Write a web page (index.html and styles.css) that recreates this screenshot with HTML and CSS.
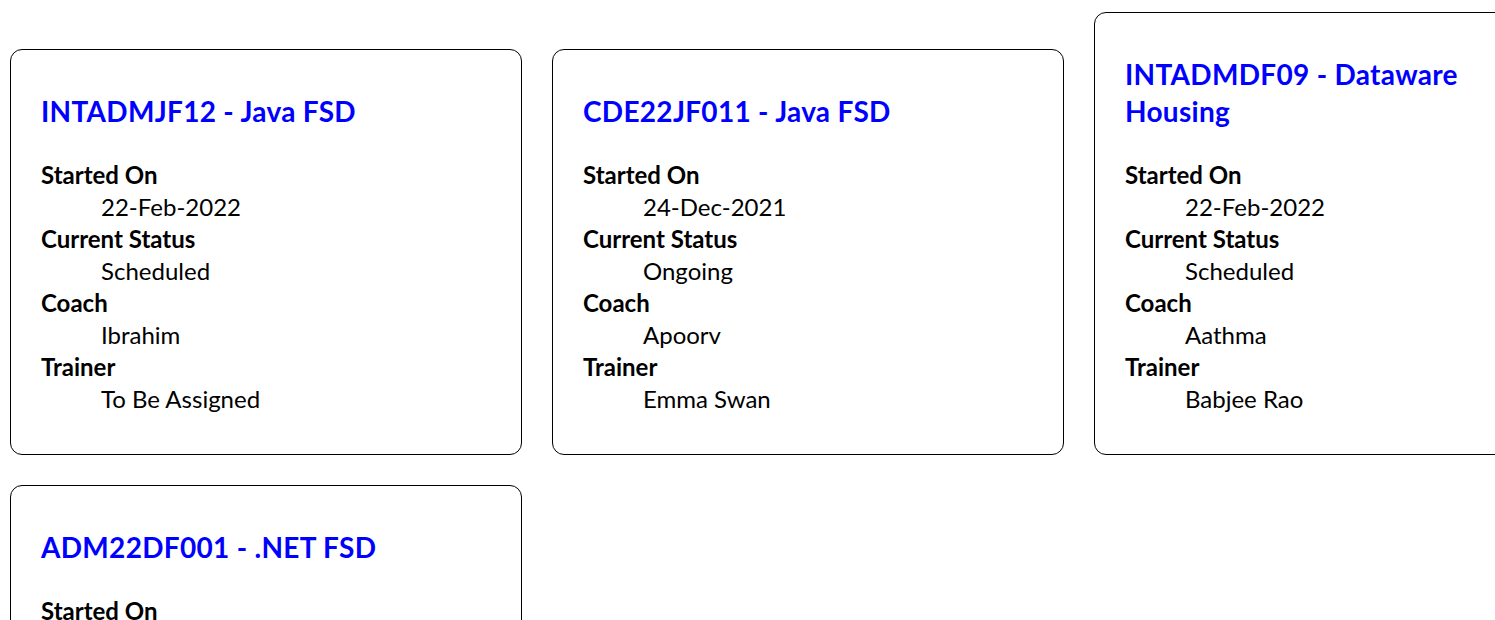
FILE: index.html
```html
<!DOCTYPE html>
<html lang="en">
<head>
<meta charset="utf-8">
<title>Batches</title>
<link rel="stylesheet" href="styles.css">
</head>
<body>
<div class="cards">
  <div class="card">
    <h3 class="card-title">INTADMJF12 - Java FSD</h3>
    <dl class="card-details">
      <dt>Started On</dt><dd>22-Feb-2022</dd>
      <dt>Current Status</dt><dd>Scheduled</dd>
      <dt>Coach</dt><dd>Ibrahim</dd>
      <dt>Trainer</dt><dd>To Be Assigned</dd>
    </dl>
  </div>
  <div class="card">
    <h3 class="card-title">CDE22JF011 - Java FSD</h3>
    <dl class="card-details">
      <dt>Started On</dt><dd>24-Dec-2021</dd>
      <dt>Current Status</dt><dd>Ongoing</dd>
      <dt>Coach</dt><dd>Apoorv</dd>
      <dt>Trainer</dt><dd>Emma Swan</dd>
    </dl>
  </div>
  <div class="card">
    <h3 class="card-title">INTADMDF09 - Dataware Housing</h3>
    <dl class="card-details">
      <dt>Started On</dt><dd>22-Feb-2022</dd>
      <dt>Current Status</dt><dd>Scheduled</dd>
      <dt>Coach</dt><dd>Aathma</dd>
      <dt>Trainer</dt><dd>Babjee Rao</dd>
    </dl>
  </div>
  <div class="card">
    <h3 class="card-title">ADM22DF001 - .NET FSD</h3>
    <dl class="card-details">
      <dt>Started On</dt><dd>01-Mar-2022</dd>
      <dt>Current Status</dt><dd>Scheduled</dd>
      <dt>Coach</dt><dd>Ibrahim</dd>
      <dt>Trainer</dt><dd>To Be Assigned</dd>
    </dl>
  </div>
</div>
</body>
</html>
```
FILE: styles.css
```css
html, body {
  overflow: hidden;
}
body {
  margin: 0;
  background: #ffffff;
  color: #000000;
  font-family: Lato, "Open Sans", Arial, sans-serif;
  font-size: 24px;
  line-height: 32px;
}
.cards {
  display: flex;
  flex-wrap: wrap;
  align-items: flex-end;
  gap: 30px;
  width: 1600px;
  padding: 12px 10px;
}
.card {
  box-sizing: border-box;
  width: 512px;
  border: 1px solid #000000;
  border-radius: 12px;
  padding: 15px 45px 15px 30px;
}
.card-title {
  margin: 28px 0 29px;
  color: #0000ff;
  font-size: 28px;
  font-weight: 700;
  line-height: 37px;
  letter-spacing: 0.3px;
}
.card-details {
  margin: 24px 0;
}
.card-details dt {
  font-weight: 700;
}
.card-details dd {
  margin-left: 60px;
}
```
